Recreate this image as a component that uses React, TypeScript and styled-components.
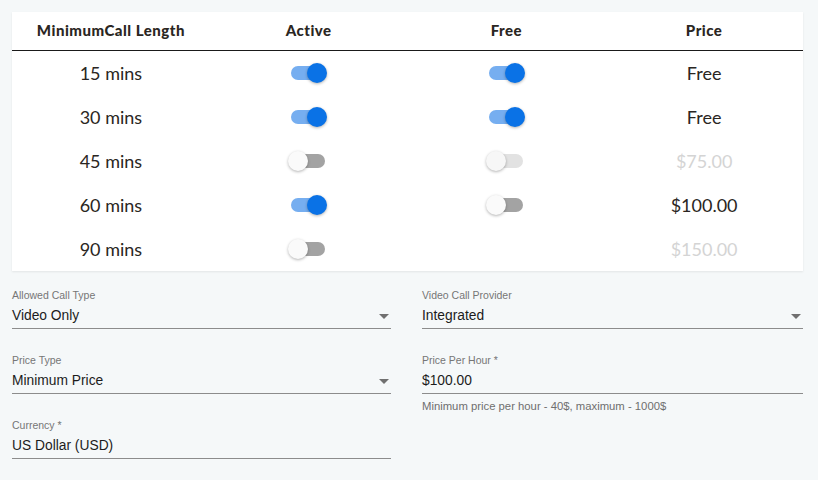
import React from "react";
import styled, { createGlobalStyle } from "styled-components";

const Global = createGlobalStyle`
  html, body { margin: 0; padding: 0; background: #f5f8f9; }
  body { width: 818px; height: 480px; overflow: hidden; }
`;

const Page = styled.div`
  padding: 12px 15px 0 12px;
  box-sizing: border-box;
  width: 818px;
`;

const Card = styled.div`
  background: #ffffff;
  box-shadow: 0 1px 2px rgba(0,0,0,0.08);
  font-family: "Lato", "Noto Sans", sans-serif;
  color: #2b2b2b;
`;

const HeaderRow = styled.div`
  display: grid;
  grid-template-columns: repeat(4, 1fr);
  height: 38px;
  border-bottom: 1px solid #1a1a1a;
  align-items: center;
`;

const HeadCell = styled.div`
  text-align: center;
  font-weight: 900;
  font-size: 15px;
  letter-spacing: 0.5px;
  color: #2a2622;
  padding-bottom: 2px;
`;

const Row = styled.div`
  display: grid;
  grid-template-columns: repeat(4, 1fr);
  height: 44px;
  align-items: center;
`;

const Cell = styled.div<{ $muted?: boolean }>`
  display: flex;
  justify-content: center;
  align-items: center;
  font-size: 18px;
  color: ${(p) => (p.$muted ? "#d4d4d4" : "#2a2622")};
`;

const Track = styled.div<{ $on: boolean; $disabled?: boolean }>`
  position: relative;
  width: 34px;
  height: 14px;
  border-radius: 7px;
  margin-left: -1px;
  background: ${(p) => (p.$disabled ? "#e2e2e2" : p.$on ? "#76aef0" : "#a3a3a3")};
`;

const Thumb = styled.div<{ $on: boolean; $disabled?: boolean }>`
  position: absolute;
  top: -3px;
  left: ${(p) => (p.$on ? "16px" : "-3px")};
  width: 20px;
  height: 20px;
  border-radius: 50%;
  background: ${(p) => (p.$disabled ? "#f7f7f7" : p.$on ? "#0a72e6" : "#fafafa")};
  box-shadow: 0 1px 3px rgba(0,0,0,0.3);
`;

const Switch = ({ on, disabled }: { on: boolean; disabled?: boolean }) => (
  <Track $on={on} $disabled={disabled}>
    <Thumb $on={on} $disabled={disabled} />
  </Track>
);

const Form = styled.div`
  display: grid;
  grid-template-columns: 379px 381px;
  column-gap: 31px;
  margin-top: 18px;
  font-family: "Liberation Sans", Arial, sans-serif;
`;

const Column = styled.div`
  display: flex;
  flex-direction: column;
`;

const Field = styled.div`
  display: flex;
  flex-direction: column;
  margin-bottom: 25px;
`;

const Label = styled.div`
  font-size: 10.5px;
  color: #767676;
  height: 13px;
  line-height: 13px;
`;

const ValueLine = styled.div`
  display: flex;
  align-items: center;
  justify-content: space-between;
  height: 24px;
  padding-top: 2px;
  line-height: 24px;
  border-bottom: 1px solid #8c8c8c;
  font-size: 13.8px;
  color: #1c1c1c;
`;

const Caret = styled.span`
  width: 0;
  height: 0;
  border-left: 5px solid transparent;
  border-right: 5px solid transparent;
  border-top: 5px solid #707070;
  margin-right: 2px;
`;

const Helper = styled.div`
  font-size: 11.3px;
  color: #6f6f6f;
  margin-top: 6px;
  margin-bottom: -12px;
`;

const rows: { len: string; active: boolean; free: boolean | null; freeDisabled?: boolean; price: string; muted?: boolean }[] = [
  { len: "15 mins", active: true, free: true, price: "Free" },
  { len: "30 mins", active: true, free: true, price: "Free" },
  { len: "45 mins", active: false, free: false, freeDisabled: true, price: "$75.00", muted: true },
  { len: "60 mins", active: true, free: false, price: "$100.00" },
  { len: "90 mins", active: false, free: null, price: "$150.00", muted: true },
];

export default function App() {
  return (
    <>
      <Global />
      <Page>
        <Card>
          <HeaderRow>
            <HeadCell>MinimumCall Length</HeadCell>
            <HeadCell>Active</HeadCell>
            <HeadCell>Free</HeadCell>
            <HeadCell>Price</HeadCell>
          </HeaderRow>
          {rows.map((r) => (
            <Row key={r.len}>
              <Cell>{r.len}</Cell>
              <Cell>
                <Switch on={r.active} />
              </Cell>
              <Cell>{r.free !== null && <Switch on={r.free} disabled={r.freeDisabled} />}</Cell>
              <Cell $muted={r.muted}>{r.price}</Cell>
            </Row>
          ))}
        </Card>
        <Form>
          <Column>
            <Field>
              <Label>Allowed Call Type</Label>
              <ValueLine>
                <span>Video Only</span>
                <Caret />
              </ValueLine>
            </Field>
            <Field>
              <Label>Price Type</Label>
              <ValueLine>
                <span>Minimum Price</span>
                <Caret />
              </ValueLine>
            </Field>
            <Field>
              <Label>Currency *</Label>
              <ValueLine>
                <span>US Dollar (USD)</span>
              </ValueLine>
            </Field>
          </Column>
          <Column>
            <Field>
              <Label>Video Call Provider</Label>
              <ValueLine>
                <span>Integrated</span>
                <Caret />
              </ValueLine>
            </Field>
            <Field>
              <Label>Price Per Hour *</Label>
              <ValueLine>
                <span>$100.00</span>
              </ValueLine>
              <Helper>Minimum price per hour - 40$, maximum - 1000$</Helper>
            </Field>
          </Column>
        </Form>
      </Page>
    </>
  );
}
